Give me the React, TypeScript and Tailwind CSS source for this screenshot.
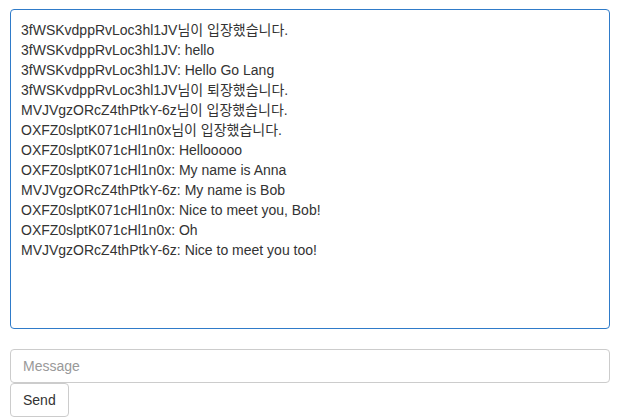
const lines = [
  "3fWSKvdppRvLoc3hl1JV님이 입장했습니다.",
  "3fWSKvdppRvLoc3hl1JV: hello",
  "3fWSKvdppRvLoc3hl1JV: Hello Go Lang",
  "3fWSKvdppRvLoc3hl1JV님이 퇴장했습니다.",
  "MVJVgzORcZ4thPtkY-6z님이 입장했습니다.",
  "OXFZ0slptK071cHl1n0x님이 입장했습니다.",
  "OXFZ0slptK071cHl1n0x: Hellooooo",
  "OXFZ0slptK071cHl1n0x: My name is Anna",
  "MVJVgzORcZ4thPtkY-6z: My name is Bob",
  "OXFZ0slptK071cHl1n0x: Nice to meet you, Bob!",
  "OXFZ0slptK071cHl1n0x: Oh",
  "MVJVgzORcZ4thPtkY-6z: Nice to meet you too!",
];

export default function App() {
  return (
    <div
      className="bg-white px-[10px] pt-[9px] text-[14px] leading-[20px] text-[#333]"
      style={{ fontFamily: '"Liberation Sans", "Noto Sans CJK KR", sans-serif' }}
    >
      {/* chat log */}
      <div className="h-[320px] w-[600px] rounded-[4px] border border-[#2f7bc9] p-[10px] overflow-hidden">
        {lines.map((l, i) => (
          <div key={i}>{l}</div>
        ))}
      </div>

      <div className="mt-[20px] flex flex-col items-start">
        <input
          placeholder="Message"
          className="h-[34px] w-[600px] rounded-[4px] border border-[#ccc] px-[12px] text-[14px] text-[#555] placeholder:text-[#999] outline-none"
        />
        <button className="h-[34px] rounded-[4px] border border-[#ccc] bg-white px-[12px] text-[14px] text-[#333]">
          Send
        </button>
      </div>
    </div>
  );
}
